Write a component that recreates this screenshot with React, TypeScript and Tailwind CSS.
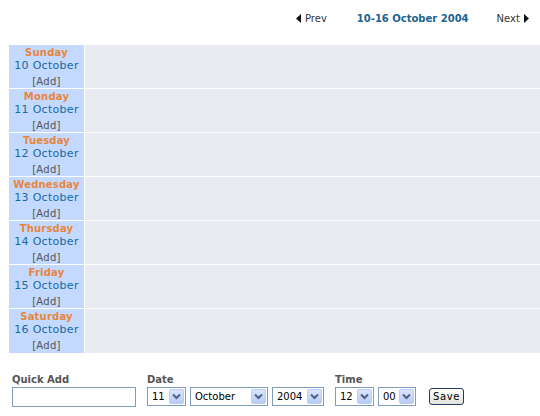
import React from "react";

const days = [
  ["Sunday", "10 October"],
  ["Monday", "11 October"],
  ["Tuesday", "12 October"],
  ["Wednesday", "13 October"],
  ["Thursday", "14 October"],
  ["Friday", "15 October"],
  ["Saturday", "16 October"],
];

function Arrow() {
  return (
    <div className="w-[15px] h-[15px] mr-[1px] flex items-center justify-center bg-gradient-to-b from-[#dbe6fd] to-[#b6cbf7] border border-[#bccdf3] rounded-[2px]">
      <svg width="9" height="7" viewBox="0 0 9 7">
        <path d="M1 1.5 L4.5 5 L8 1.5" stroke="#4d6185" strokeWidth="2" fill="none" />
      </svg>
    </div>
  );
}

function Sel({ value, w }: { value: string; w: string }) {
  return (
    <div className={`${w} h-[19px] border border-[#7f9db9] bg-white flex items-center justify-between pl-[4px]`}>
      <span className="text-[10px] text-black">{value}</span>
      <Arrow />
    </div>
  );
}

export default function App() {
  return (
    <div className="w-[540px] h-[416px] bg-white" style={{ fontFamily: '"DejaVu Sans", Verdana, sans-serif' }}>
      <div className="h-[45px] flex items-start pt-[11px]">
        <div className="ml-[296px] flex items-center text-[10px] text-[#333] gap-[4px]">
          <svg width="5" height="9" viewBox="0 0 5 9"><path d="M5 0 L0 4.5 L5 9 Z" fill="#111" /></svg>
          <span>Prev</span>
        </div>
        <div className="ml-[30px] text-[10px] font-bold text-[#1b6391]">10-16 October 2004</div>
        <div className="ml-[28px] flex items-center text-[10px] text-[#333] gap-[4px]">
          <span>Next</span>
          <svg width="5" height="9" viewBox="0 0 5 9"><path d="M0 0 L5 4.5 L0 9 Z" fill="#111" /></svg>
        </div>
      </div>
      <div className="ml-[9px] flex flex-col gap-[1px]">
        {days.map(([d, dt], i) => (
          <div key={d} className={`flex gap-[1px] ${i === 6 ? "h-[44px]" : "h-[43px]"}`}>
            <div className="w-[75px] bg-[#c3d9ff] flex flex-col items-center pt-[2px]">
              <div className="text-[10px] font-bold text-[#e8853a] leading-[12px] tracking-[0.2px]">{d}</div>
              <div className="text-[11px] text-[#1a6aa0] leading-[13px] tracking-[0.3px]">{dt}</div>
              <div className="text-[10px] text-[#555] leading-[12px] mt-[4px] tracking-[0.3px]">[Add]</div>
            </div>
            <div className="flex-1 bg-[#e8ebef]" />
          </div>
        ))}
      </div>
      <div className="flex mt-[21px]">
        <div className="ml-[12px] flex flex-col">
          <div className="text-[10px] font-bold text-[#555] leading-[12px]">Quick Add</div>
          <div className="mt-[1px] w-[124px] h-[20px] border border-[#7f9db9] bg-white" />
        </div>
        <div className="ml-[11px] flex flex-col">
          <div className="text-[10px] font-bold text-[#555] leading-[12px]">Date</div>
          <div className="mt-[1px] flex gap-[4px]">
            <Sel value="11" w="w-[39px]" />
            <Sel value="October" w="w-[78px]" />
            <Sel value="2004" w="w-[52px]" />
          </div>
        </div>
        <div className="ml-[11px] flex flex-col">
          <div className="text-[10px] font-bold text-[#555] leading-[12px]">Time</div>
          <div className="mt-[1px] flex gap-[4px] items-start">
            <Sel value="12" w="w-[39px]" />
            <Sel value="00" w="w-[38px]" />
            <div className="ml-[9px] mt-[1px] w-[35px] h-[17px] border border-[#1c3d66] rounded-[3px] bg-gradient-to-b from-white to-[#e3e3dc] flex items-center justify-center text-[10px] text-black tracking-[0.6px]">Save</div>
          </div>
        </div>
      </div>
    </div>
  );
}
